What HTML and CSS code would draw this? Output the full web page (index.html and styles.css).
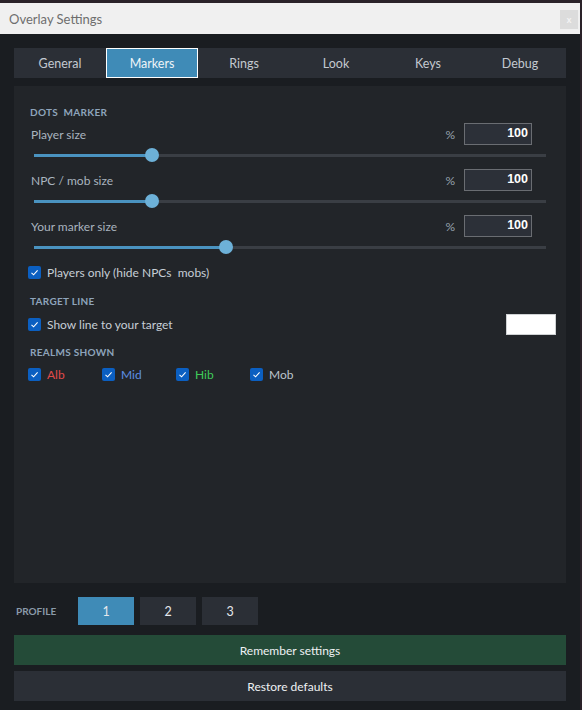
FILE: index.html
```html
<!DOCTYPE html>
<html>
<head>
<meta charset="utf-8">
<title>Overlay Settings</title>
<link rel="stylesheet" href="styles.css">
</head>
<body>
<div class="window">
  <div class="titlebar">
    <span class="title">Overlay Settings</span>
    <span class="close">x</span>
  </div>
  <div class="content">
    <div class="tabs">
      <div class="tab">General</div>
      <div class="tab active">Markers</div>
      <div class="tab">Rings</div>
      <div class="tab">Look</div>
      <div class="tab">Keys</div>
      <div class="tab">Debug</div>
    </div>
    <div class="panel">
      <div class="section-title first">DOTS&nbsp; MARKER</div>

      <div class="field">
        <span class="label">Player size</span>
        <span class="pct">%</span>
        <span class="num">100</span>
      </div>
      <div class="slider"><div class="track"><div class="fill" style="width:23%"><span class="thumb"></span></div></div></div>

      <div class="field">
        <span class="label">NPC / mob size</span>
        <span class="pct">%</span>
        <span class="num">100</span>
      </div>
      <div class="slider"><div class="track"><div class="fill" style="width:23%"><span class="thumb"></span></div></div></div>

      <div class="field">
        <span class="label">Your marker size</span>
        <span class="pct">%</span>
        <span class="num">100</span>
      </div>
      <div class="slider"><div class="track"><div class="fill" style="width:37.5%"><span class="thumb"></span></div></div></div>

      <div class="check-row">
        <span class="cb"><svg viewBox="0 0 13 13"><path d="M3.5 6.8 L5.6 8.8 L9.6 4.4" /></svg></span>
        <span class="cb-label">Players only (hide NPCs&nbsp; mobs)</span>
      </div>

      <div class="section-title">TARGET LINE</div>
      <div class="check-row target">
        <span class="cb"><svg viewBox="0 0 13 13"><path d="M3.5 6.8 L5.6 8.8 L9.6 4.4" /></svg></span>
        <span class="cb-label">Show line to your target</span>
        <span class="swatch"></span>
      </div>

      <div class="section-title realms-title">REALMS SHOWN</div>
      <div class="realms">
        <div class="realm"><span class="cb"><svg viewBox="0 0 13 13"><path d="M3.5 6.8 L5.6 8.8 L9.6 4.4" /></svg></span><span class="alb">Alb</span></div>
        <div class="realm"><span class="cb"><svg viewBox="0 0 13 13"><path d="M3.5 6.8 L5.6 8.8 L9.6 4.4" /></svg></span><span class="mid">Mid</span></div>
        <div class="realm"><span class="cb"><svg viewBox="0 0 13 13"><path d="M3.5 6.8 L5.6 8.8 L9.6 4.4" /></svg></span><span class="hib">Hib</span></div>
        <div class="realm"><span class="cb"><svg viewBox="0 0 13 13"><path d="M3.5 6.8 L5.6 8.8 L9.6 4.4" /></svg></span><span class="mob">Mob</span></div>
      </div>
    </div>

    <div class="profile">
      <span class="profile-label">PROFILE</span>
      <div class="pbtn active">1</div>
      <div class="pbtn">2</div>
      <div class="pbtn">3</div>
    </div>
    <div class="btn remember">Remember settings</div>
    <div class="btn restore">Restore defaults</div>
  </div>
</div>
</body>
</html>
```
FILE: styles.css
```css
html, body {
  margin: 0;
  padding: 0;
}
body {
  background: #2a2229;
  width: 582px;
  height: 710px;
  overflow: hidden;
  font-family: Lato, "Open Sans", sans-serif;
  font-size: 12px;
}
.window {
  width: 580px;
  height: 707px;
  margin-top: 3px;
  background: #1a1d21;
  display: flex;
  flex-direction: column;
}
.titlebar {
  height: 31px;
  background: #f0f0f0;
  display: flex;
  align-items: center;
  justify-content: space-between;
  padding-left: 9px;
  padding-right: 2px;
}
.title {
  color: #6e6e6e;
  font-size: 13px;
}
.close {
  width: 18px;
  height: 19px;
  background: #dcdcdc;
  color: #f4f4f4;
  font-size: 9px;
  font-weight: bold;
  display: flex;
  align-items: center;
  justify-content: center;
  margin-top: 2px;
}
.content {
  padding: 14px 14px 0 14px;
  display: flex;
  flex-direction: column;
}
.tabs {
  display: grid;
  grid-template-columns: repeat(6, 1fr);
  height: 30px;
  background: #2b2f36;
}
.tab {
  display: flex;
  align-items: center;
  justify-content: center;
  color: #c3c9d0;
  font-size: 12.5px;
  box-sizing: border-box;
}
.tab.active {
  background: #3f8bb7;
  border: 1px solid #ffffff;
  color: #eef4f8;
}
.panel {
  margin-top: 8px;
  height: 497px;
  background: #222529;
  box-sizing: border-box;
  padding: 19px 10px 0 16px;
  display: flex;
  flex-direction: column;
}
.section-title {
  font-size: 10px;
  font-weight: bold;
  color: #8ea4bb;
  letter-spacing: 0.3px;
  height: 14px;
  line-height: 14px;
  margin-top: 11px;
  margin-bottom: 5px;
}
.section-title.first {
  margin-top: 0;
  margin-bottom: 4px;
}
.section-title.realms-title {
  margin-top: 10px;
  margin-bottom: 4px;
}
.field {
  height: 22px;
  display: flex;
  align-items: center;
  padding-right: 24px;
}
.label {
  flex: 1;
  color: #a9b4bf;
  font-size: 12px;
  padding-left: 1px;
}
.pct {
  color: #96a2ae;
  font-size: 12px;
  margin-right: 9px;
}
.num {
  width: 68px;
  height: 22px;
  box-sizing: border-box;
  background: #2c3038;
  border: 1px solid #6a6d72;
  color: #ffffff;
  font-weight: bold;
  font-family: "Liberation Sans", Arial, sans-serif;
  font-size: 12.5px;
  text-align: right;
  padding-right: 3px;
  line-height: 19px;
}
.slider {
  height: 20px;
  margin: 0 10px 4px 4px;
  display: flex;
  align-items: center;
}
.track {
  width: 100%;
  height: 3px;
  background: #3a3e44;
}
.fill {
  height: 3px;
  background: #4a93c0;
  position: relative;
}
.thumb {
  position: absolute;
  right: -7px;
  top: -5.5px;
  width: 14px;
  height: 14px;
  border-radius: 50%;
  background: #6db1d8;
}
.check-row {
  height: 22px;
  display: flex;
  align-items: center;
  margin-left: -2px;
}
.cb {
  width: 13px;
  height: 13px;
  border-radius: 2px;
  background: #0b5fc1;
  display: inline-flex;
  flex: none;
  margin-right: 6px;
}
.cb svg {
  width: 13px;
  height: 13px;
}
.cb path {
  fill: none;
  stroke: #ffffff;
  stroke-width: 1.1;
}
.cb-label {
  color: #c6ced6;
  font-size: 12px;
}
.target .cb-label {
  flex: 1;
}
.swatch {
  width: 50px;
  height: 21px;
  box-sizing: border-box;
  background: #ffffff;
  border: 1px solid #cfd2d4;
}
.realms {
  display: flex;
  height: 22px;
  align-items: center;
  margin-left: -2px;
}
.realm {
  width: 74px;
  display: flex;
  align-items: center;
  font-size: 12px;
}
.alb { color: #e04a4a; }
.mid { color: #5d8fe3; }
.hib { color: #3fcb5a; }
.mob { color: #bcc4cc; }
.profile {
  margin-top: 14px;
  height: 28px;
  display: flex;
  align-items: center;
  gap: 6px;
}
.profile-label {
  width: 58px;
  padding-left: 2px;
  box-sizing: border-box;
  font-size: 10px;
  font-weight: bold;
  color: #8a9aa9;
}
.pbtn {
  width: 56px;
  height: 28px;
  background: #2b2f36;
  color: #e4e8ec;
  display: flex;
  align-items: center;
  justify-content: center;
  font-size: 12.5px;
}
.pbtn.active {
  background: #3f8bb7;
}
.btn {
  height: 30px;
  display: flex;
  align-items: center;
  justify-content: center;
  color: #eef1f3;
  font-size: 12px;
}
.remember {
  margin-top: 10px;
  background: #244b38;
}
.restore {
  margin-top: 6px;
  background: #2b2f36;
}
```
